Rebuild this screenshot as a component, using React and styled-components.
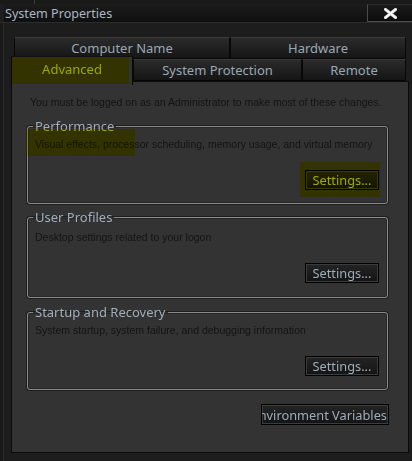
import React from "react";
import styled, { createGlobalStyle } from "styled-components";

const GlobalStyle = createGlobalStyle`
  html, body {
    margin: 0;
    padding: 0;
    background: #161616;
  }
  * {
    box-sizing: border-box;
  }
`;

const Screen = styled.div`
  width: 412px;
  height: 461px;
  display: flex;
  flex-direction: column;
  overflow: hidden;
  background: #1c1c1c;
  font-family: "Noto Sans", "Open Sans", sans-serif;
`;

const BehindStrip = styled.div`
  height: 4px;
  display: flex;
  background: #1a1a1a;

  span {
    width: 35px;
    border-right: 1px solid #3a3a3a;
  }
`;

const TitleBar = styled.div`
  height: 19px;
  display: flex;
  align-items: stretch;
  background: linear-gradient(#1c1c1c, #0f0f0f);
  border-bottom: 1px solid #2c2c2c;
`;

const Title = styled.div`
  flex: 1;
  display: flex;
  align-items: center;
  padding-left: 1px;
  color: #a9b6c4;
  font-size: 12.6px;
  border-left: 4px solid #1e1e1e;
`;

const CloseButton = styled.button`
  width: 45px;
  height: 18px;
  padding: 0;
  display: flex;
  align-items: center;
  justify-content: center;
  background: linear-gradient(#1a1a1a, #0c0c0c);
  border: 1px solid #4a4a4a;
  border-right: none;
  border-top-color: #2a2a2a;
`;

const Body = styled.div`
  flex: 1;
  display: flex;
  flex-direction: column;
  padding: 14px 3px 7px 8px;
  border-left: 3px solid #191919;
  box-shadow: inset 1px 0 #2c2c2c;
  background: #1d1d1d;
`;

const TabRow = styled.div`
  display: flex;
  height: 22px;
  margin-left: ${(p) => p.$indent}px;
  margin-right: 3px;
  position: relative;
  z-index: ${(p) => (p.$front ? 2 : 1)};
`;

const Tab = styled.div`
  position: relative;
  flex: 0 0 ${(p) => p.$width}px;
  display: flex;
  align-items: center;
  justify-content: center;
  color: #9aa8b6;
  font-size: 13px;
  background: ${(p) =>
    p.$selected ? "#333333" : "linear-gradient(#2b2b2b, #151515)"};
  border: 1px solid #080808;
  border-top-color: ${(p) => (p.$selected ? "#111" : "#3a3a3a")};
  border-bottom: ${(p) => (p.$selected ? "none" : "1px solid #080808")};
  margin-top: ${(p) => (p.$selected ? -3 : 0)}px;
  margin-bottom: ${(p) => (p.$selected ? -4 : 0)}px;
  padding-bottom: ${(p) => (p.$selected ? 5 : 0)}px;
  z-index: ${(p) => (p.$selected ? 3 : 1)};
`;

const Panel = styled.div`
  position: relative;
  z-index: 1;
  height: 372px;
  display: flex;
  flex-direction: column;
  padding: 13px 20px 0 15px;
  background: #333333;
  border: 1px solid #0b0b0b;
`;

const SmallText = styled.div`
  font-family: "Liberation Sans", Arial, sans-serif;
  font-size: 10.5px;
  line-height: 14px;
  white-space: nowrap;
  color: #141414;
`;

const Intro = styled(SmallText)`
  margin: 0 0 9px 3px;
`;

const Group = styled.fieldset`
  position: relative;
  margin: 0 0 ${(p) => p.$gap}px 0;
  padding: 0 8px ${(p) => p.$bottom}px 5px;
  border: 1px solid #8a8a8a;
  border-radius: 3px;
  box-shadow: 0 0 0 1px #1e1e1e, inset 0 0 0 1px #262626;
  min-width: 0;
`;

const Legend = styled.legend`
  padding: 0 2px;
  font-size: 13px;
  line-height: 16px;
  color: #a3aebb;
`;

const Description = styled(SmallText)`
  margin: ${(p) => p.$top}px 0 0 2px;
`;

const ButtonRow = styled.div`
  display: flex;
  justify-content: flex-end;
  margin-top: 19px;
`;

const Marked = styled.span`
  position: relative;
  display: inline-flex;
`;

const Highlight = styled.span`
  position: absolute;
  top: ${(p) => p.$t}px;
  left: ${(p) => p.$l}px;
  width: ${(p) => p.$w}px;
  height: ${(p) => p.$h}px;
  background: #ffff00;
  mix-blend-mode: multiply;
  pointer-events: none;
  z-index: 5;
`;

const Button = styled.button`
  width: ${(p) => p.$width}px;
  height: ${(p) => p.$height}px;
  padding: 0 ${(p) => (p.$clipped ? 1 : 0)}px 0 0;
  display: flex;
  align-items: center;
  justify-content: ${(p) => (p.$clipped ? "flex-end" : "center")};
  overflow: hidden;
  font-family: "Noto Sans", "Open Sans", sans-serif;
  font-size: 12.8px;
  color: #9eacba;
  background: linear-gradient(#242424, #141414);
  border: 1px solid #000;
  box-shadow: inset 0 0 0 1px #3c3c3c;

  span {
    flex-shrink: 0;
    white-space: nowrap;
  }
`;

const Footer = styled.div`
  display: flex;
  justify-content: flex-end;
  margin-right: -1px;
`;

const CloseIcon = () => (
  <svg width="13" height="11" viewBox="0 0 13 11">
    <path
      d="M1.5 1.5 L11.5 9.5 M11.5 1.5 L1.5 9.5"
      stroke="#d8d8d8"
      strokeWidth="3.2"
      strokeLinecap="square"
    />
    <path
      d="M1.5 1.5 L11.5 9.5 M11.5 1.5 L1.5 9.5"
      stroke="#ffffff"
      strokeWidth="1.4"
      strokeLinecap="square"
    />
  </svg>
);

const groups = [
  {
    title: "Performance",
    text: "Visual effects, processor scheduling, memory usage, and virtual memory",
    descTop: 3,
    gap: 5,
    bottom: 13,
    marked: true,
  },
  {
    title: "User Profiles",
    text: "Desktop settings related to your logon",
    descTop: 5,
    gap: 6,
    bottom: 14,
  },
  {
    title: "Startup and Recovery",
    text: "System startup, system failure, and debugging information",
    descTop: 3,
    gap: 14,
    bottom: 13,
  },
];

const App = () => {
  return (
    <>
      <GlobalStyle />
      <Screen>
        <BehindStrip>
          <span />
        </BehindStrip>
        <TitleBar>
          <Title>System Properties</Title>
          <CloseButton aria-label="Close">
            <CloseIcon />
          </CloseButton>
        </TitleBar>
        <Body>
          <TabRow $indent={3}>
            <Tab $width={216}>Computer Name</Tab>
            <Tab $width={176}>Hardware</Tab>
          </TabRow>
          <TabRow $indent={0} $front>
            <Tab $width={122} $selected>
              Advanced
              <Highlight $t={0} $l={0} $w={117} $h={27} />
            </Tab>
            <Tab $width={169}>System Protection</Tab>
            <Tab $width={104}>Remote</Tab>
          </TabRow>
          <Panel>
            <Intro>
              You must be logged on as an Administrator to make most of these
              changes.
            </Intro>
            {groups.map((g) => (
              <Group key={g.title} $gap={g.gap} $bottom={g.bottom}>
                <Legend>{g.title}</Legend>
                {g.marked && <Highlight $t={-5} $l={-1} $w={108} $h={27} />}
                <Description $top={g.descTop}>{g.text}</Description>
                <ButtonRow>
                  <Marked>
                    <Button $width={74} $height={20}>
                      <span>Settings...</span>
                    </Button>
                    {g.marked && <Highlight $t={-8} $l={-5} $w={80} $h={35} />}
                  </Marked>
                </ButtonRow>
              </Group>
            ))}
            <Footer>
              <Button $width={128} $height={21} $clipped>
                <span>Environment Variables</span>
              </Button>
            </Footer>
          </Panel>
        </Body>
      </Screen>
    </>
  );
};

export default App;
